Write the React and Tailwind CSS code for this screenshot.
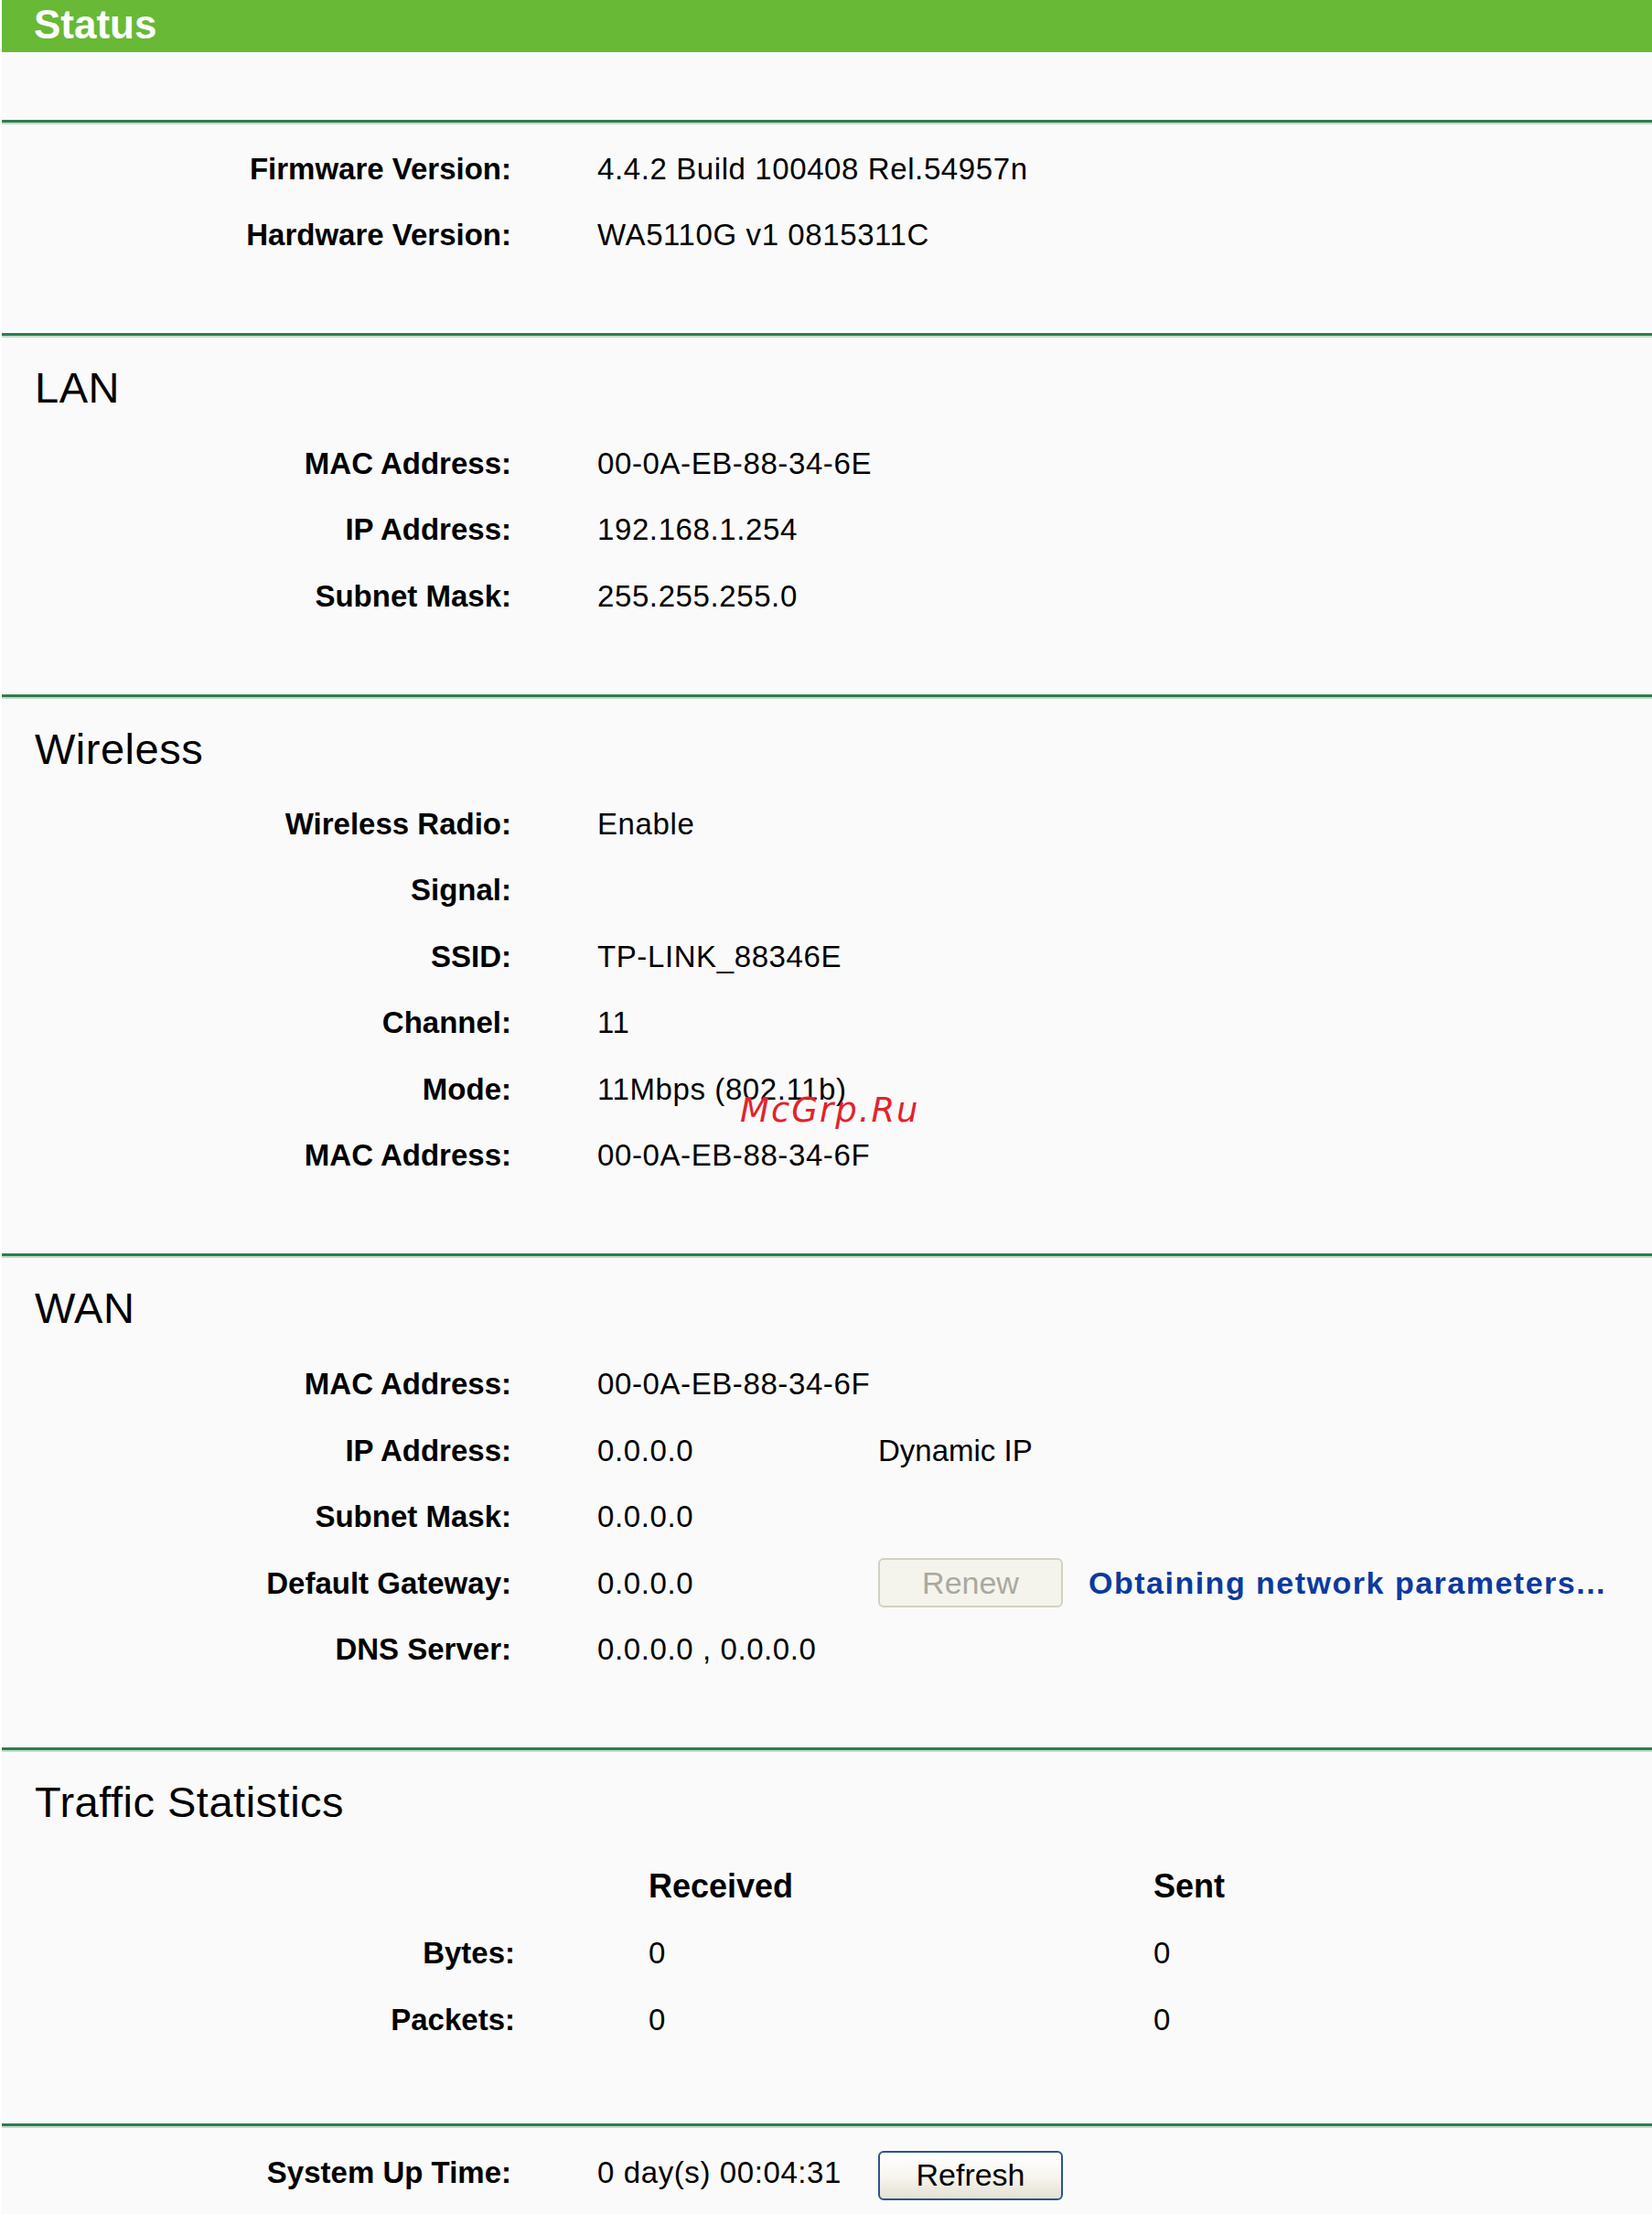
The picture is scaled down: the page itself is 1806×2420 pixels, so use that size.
import React from 'react';

const font = { fontFamily: '"Liberation Sans", Arial, sans-serif' };

const Divider = () => (
  <div>
    <div className="h-[3px] bg-[#2f7c4e]" />
    <div className="h-[2px] bg-[#c3dcc9]" />
  </div>
);

const Heading = ({ children, mb = 'mb-[18px]' }) => (
  <div className={`pt-[27px] ${mb} pl-[36px] text-[47px] leading-[56px] tracking-[0.5px] text-black`}>{children}</div>
);

const Row = ({ label, value, extra }) => (
  <div className="flex h-[72.5px] items-center">
    <div className="w-[557px] shrink-0 text-right text-[33px] font-bold text-black">{label}</div>
    <div className="ml-[94px] w-[307px] shrink-0 whitespace-nowrap text-[33px] tracking-[0.6px] text-black">{value}</div>
    {extra}
  </div>
);

const OldButton = ({ children, disabled }) =>
  disabled ? (
    <div className="flex h-[54px] w-[202px] items-center justify-center rounded-[6px] border-2 border-[#d3d0bf] bg-[#f5f4ec] text-[34px] text-[#a9a9a2]">
      {children}
    </div>
  ) : (
    <div className="flex h-[54px] w-[202px] items-center justify-center rounded-[6px] border-2 border-[#2c5490] bg-gradient-to-b from-white via-[#f7f6f0] to-[#e4e1d3] text-[34px] text-black">
      {children}
    </div>
  );

const TrafficRow = ({ label, received, sent, bold }) => (
  <div className="flex h-[72.5px] items-center">
    <div className="w-[561px] shrink-0 text-right text-[33px] font-bold text-black">{label}</div>
    <div className={`ml-[146px] w-[552px] shrink-0 text-black ${bold ? 'text-[36px] font-bold' : 'text-[33px]'}`}>{received}</div>
    <div className={`text-black ${bold ? 'text-[36px] font-bold' : 'text-[33px]'}`}>{sent}</div>
  </div>
);

export default function App() {
  return (
    <div style={font} className="relative min-h-[2420px] w-[1806px] border-l-2 border-white bg-[#fafafa]">
      <div className="flex h-[57px] items-center bg-[#67b936] pl-[35px] pb-[4px]">
        <span className="text-[44px] font-bold leading-none text-white">Status</span>
      </div>

      <div className="h-[74px]" />
      <Divider />
      <div className="pt-[12px] pb-[71px]">
        <Row label="Firmware Version:" value="4.4.2 Build 100408 Rel.54957n" />
        <Row label="Hardware Version:" value="WA5110G v1 0815311C" />
      </div>

      <Divider />
      <div className="pb-[71.5px]">
        <Heading>LAN</Heading>
        <Row label="MAC Address:" value="00-0A-EB-88-34-6E" />
        <Row label="IP Address:" value="192.168.1.254" />
        <Row label="Subnet Mask:" value="255.255.255.0" />
      </div>

      <Divider />
      <div className="pb-[71px]">
        <Heading mb="mb-[17px]">Wireless</Heading>
        <Row label="Wireless Radio:" value="Enable" />
        <Row label="Signal:" value="" />
        <Row label="SSID:" value="TP-LINK_88346E" />
        <Row label="Channel:" value="11" />
        <Row label="Mode:" value="11Mbps (802.11b)" />
        <Row label="MAC Address:" value="00-0A-EB-88-34-6F" />
      </div>

      <Divider />
      <div className="pb-[70.5px]">
        <Heading mb="mb-[18.5px]">WAN</Heading>
        <Row label="MAC Address:" value="00-0A-EB-88-34-6F" />
        <Row label="IP Address:" value="0.0.0.0" extra={<div className="text-[33px] text-black">Dynamic IP</div>} />
        <Row label="Subnet Mask:" value="0.0.0.0" />
        <Row
          label="Default Gateway:"
          value="0.0.0.0"
          extra={
            <div className="flex items-center">
              <OldButton disabled>Renew</OldButton>
              <span className="ml-[28px] text-[34px] font-bold tracking-[1.5px] text-[#0b3a9e]">Obtaining network parameters...</span>
            </div>
          }
        />
        <Row label="DNS Server:" value="0.0.0.0 , 0.0.0.0" />
      </div>

      <Divider />
      <div className="pb-[77.5px]">
        <Heading mb="mb-[28.5px]">Traffic Statistics</Heading>
        <TrafficRow label="" received="Received" sent="Sent" bold />
        <TrafficRow label="Bytes:" received="0" sent="0" />
        <TrafficRow label="Packets:" received="0" sent="0" />
      </div>

      <Divider />
      <div className="pt-[12.5px]">
        <Row
          label="System Up Time:"
          value="0 day(s) 00:04:31"
          extra={
            <div className="mt-[6px]">
              <OldButton>Refresh</OldButton>
            </div>
          }
        />
      </div>

      <div
        className="absolute left-[807px] top-[1186px] text-[37px] italic tracking-[2px] text-[#e3222b]"
        style={{ fontFamily: '"DejaVu Sans", sans-serif' }}
      >
        McGrp.Ru
      </div>
    </div>
  );
}
